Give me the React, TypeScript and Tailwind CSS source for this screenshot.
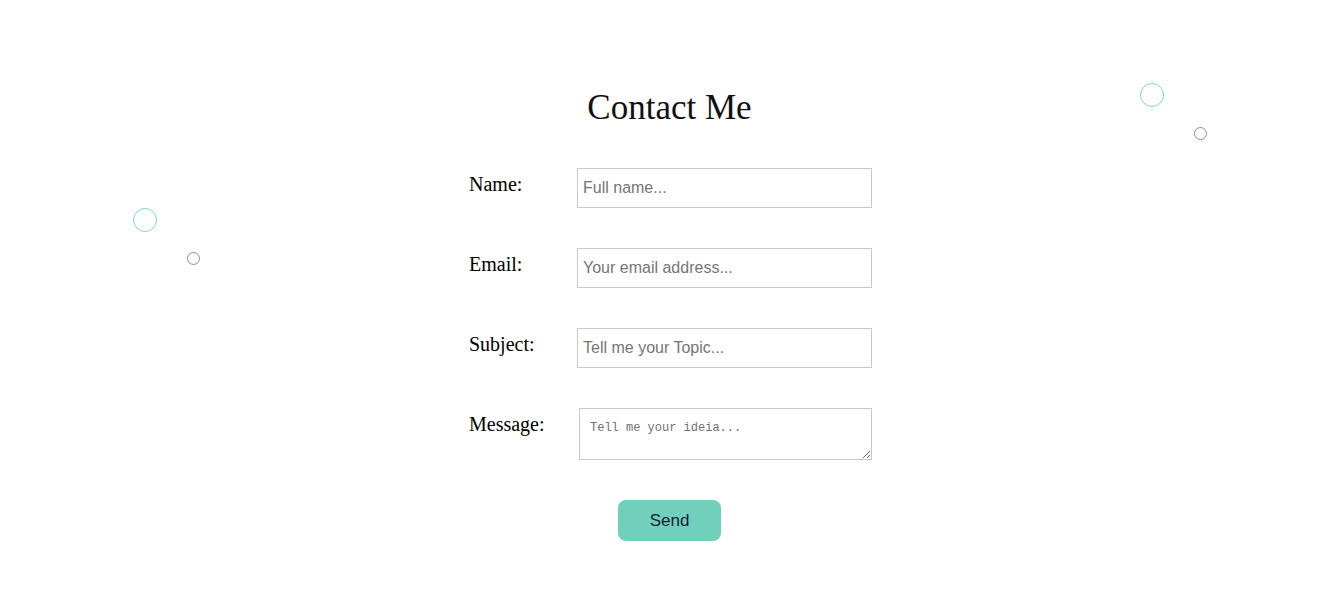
import React from "react";

function Bubble({ className }: { className: string }) {
  return <span className={`absolute rounded-full ${className}`} />;
}

function Field({
  label,
  placeholder,
}: {
  label: string;
  placeholder: string;
}) {
  return (
    <div className="flex items-start">
      <label className="w-[108px] pt-[5px] text-[20px] leading-[23px] text-black">
        {label}
      </label>
      <input
        type="text"
        placeholder={placeholder}
        className="h-10 w-[295px] border border-[#c8c8c8] bg-white px-[5px] font-['Liberation_Sans',Arial,sans-serif] text-[16px] text-black outline-none placeholder:text-[#757575]"
      />
    </div>
  );
}

export default function App() {
  return (
    <div className="relative h-[614px] w-full overflow-hidden bg-white font-['Liberation_Serif','Times_New_Roman',serif]">
      <Bubble className="left-[133px] top-[208px] h-6 w-6 border border-[#7fd6c3]" />
      <Bubble className="left-[187px] top-[252px] h-[13px] w-[13px] border-[1.5px] border-[#8f8f8f]" />
      <Bubble className="left-[1140px] top-[83px] h-6 w-6 border border-[#7fd6c3]" />
      <Bubble className="left-[1194px] top-[127px] h-[13px] w-[13px] border-[1.5px] border-[#8f8f8f]" />

      <div className="flex flex-col items-center pr-[5px] pt-[88px]">
        <h1 className="text-[35px] leading-[40px] text-[#111]">Contact Me</h1>

        <form className="ml-[2px] mt-10 flex w-[403px] flex-col gap-10">
          <Field label="Name:" placeholder="Full name..." />
          <Field label="Email:" placeholder="Your email address..." />
          <Field label="Subject:" placeholder="Tell me your Topic..." />
          <div className="flex items-start">
            <label className="w-[108px] pt-[5px] text-[20px] leading-[23px] text-black">
              Message:
            </label>
            <textarea
              placeholder="Tell me your ideia..."
              className="ml-[2px] h-[52px] w-[293px] border border-[#c8c8c8] bg-white px-[10px] pt-[12px] font-['Liberation_Mono',monospace] text-[12px] leading-[14px] text-black outline-none placeholder:text-[#6f6f6f]"
            />
          </div>
        </form>

        <button
          type="button"
          className="mt-10 h-[41px] w-[103px] rounded-[8px] bg-[#71d0bc] font-['Liberation_Sans',Arial,sans-serif] text-[17px] text-[#152030]"
        >
          Send
        </button>
      </div>
    </div>
  );
}
